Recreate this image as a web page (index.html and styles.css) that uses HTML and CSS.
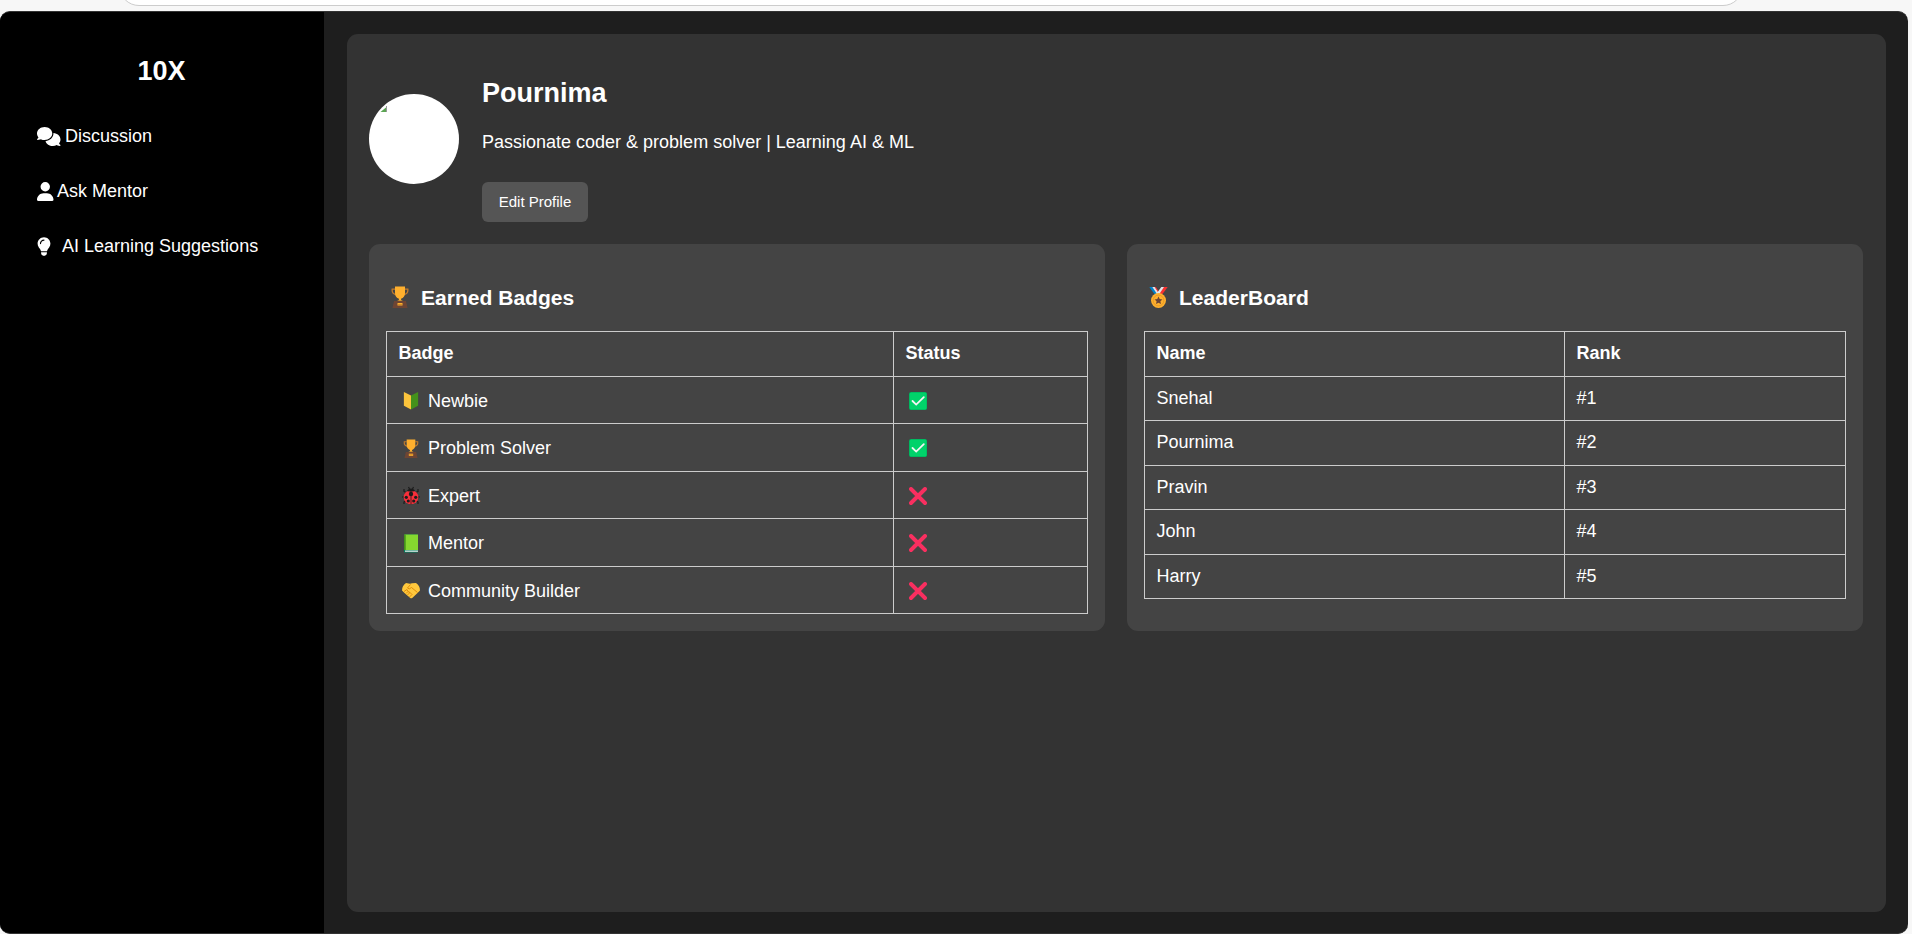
FILE: index.html
```html
<!DOCTYPE html>
<html lang="en">
<head>
<meta charset="utf-8">
<title>10X Profile</title>
<link rel="stylesheet" href="styles.css">
</head>
<body>
<svg class="defs" width="0" height="0">
  <symbol id="trophy" viewBox="0 0 18 22">
    <path d="M4 3.2H1.2C.8 6.500 2 8 5 8.500M14 3.200h2.800c.4 3.300-.8 4.800-3.800 5.300" fill="none" stroke="#c27c2c" stroke-width="1.300"/>
    <path d="M4 .5h10v6.500c0 3.300-1.800 5-3.700 5.600L10 14l2 .8H6l2-.8-.3-1.400C5.800 12 4 10.300 4 7z" fill="#ffb02e"/>
    <path d="M3 15h12l1.500 7h-15z" fill="#6d4534"/>
    <path d="M6.500 17h5v2.500h-5z" fill="#ffb02e"/><path d="M6.500 18h5v.6h-5z" fill="#b87924"/>
  </symbol>
  <symbol id="beginner" viewBox="0 0 16 20">
    <path d="M.5 1 8 4.800V19.500L.5 15.500z" fill="#fcc43c"/><path d="M15.500 1 8 4.800V19.500l7.500-4z" fill="#44911b"/>
  </symbol>
  <symbol id="ladybug" viewBox="0 0 18 18">
    <path d="M6.500.5 7.500 2.500M11.500.5 10.500 2.500M2 2.500v2.500l3 1.500M16 2.500v2.500l-3 1.500M0 10.500H4m14 0H14M2 17.500v-2l3-2m11 4v-2l-3-2" fill="none" stroke="#1c1c1c" stroke-width="1.200"/>
    <ellipse cx="9" cy="10.700" rx="7.300" ry="7" fill="#f92f3a"/>
    <path d="M5 4.500C6 1 12 1 13 4.500Q9 5.500 5 4.500z" fill="#1c1c1c"/>
    <path d="M9 4v14" stroke="#1c1c1c" stroke-width=".8"/>
    <circle cx="9" cy="7.500" r="2.200" fill="#1c1c1c"/>
    <circle cx="4.300" cy="10.800" r="1.600" fill="#1c1c1c"/><circle cx="13.700" cy="10.800" r="1.600" fill="#1c1c1c"/>
    <circle cx="6.300" cy="14.500" r="1.600" fill="#1c1c1c"/><circle cx="11.700" cy="14.500" r="1.600" fill="#1c1c1c"/>
  </symbol>
  <symbol id="book" viewBox="0 0 15 19">
    <rect x=".5" y=".5" width="14" height="18" rx="1" fill="#008463"/>
    <path d="M1.500 16.500h13v1.300h-13z" fill="#e6e6e6"/>
    <path d="M1.500.500h13V16h-14V1.500q0-1 1-1z" fill="#86d72f"/><path d="M.5 1.500q0-1 1-1H2.200V16H.5z" fill="#44911b"/>
  </symbol>
  <symbol id="handshake" viewBox="0 0 18 16">
    <path d="M4 .5 8 1.200 10 .8 14 .5q4 2.500 4 7.500l-3 3-4.500 4.300q-1.500 1-2.500 0L3 11 0 8Q0 3 4 .500z" fill="#ffc83d"/>
    <path d="m8.500 2-3 3.500q1.500 2 4-.5l6 5M2 9l3-2 1 2-2 2m2-2 2 1-2.500 2.500M8 10l2 2-2.500 2.500" fill="none" stroke="#d67d00" stroke-width=".8"/>
  </symbol>
  <symbol id="medal" viewBox="0 0 19 21">
    <path d="M.3 0h3l5 7H5.500z" fill="#0084ce"/><path d="M3.300 0h2.700l5 7H8z" fill="#e1e6eb"/><path d="M5.600 0h1.200l3.400 5-.7 1z" fill="#f8312f"/>
    <path d="M18.700 0h-4.500l-5 7h4.300z" fill="#f8312f"/><path d="M15 0h-2.700l-5 7h3z" fill="#e1e6eb"/>
    <circle cx="9.500" cy="13.500" r="7.500" fill="#ffb02e"/><circle cx="9.500" cy="13.500" r="5.400" fill="#ffb02e" stroke="#d78d20" stroke-width=".6"/>
    <path d="m9.500 9.500 1.200 2.600 2.800.3-2.100 1.900.6 2.800-2.500-1.400L7 17.100l.6-2.800-2.100-1.900 2.800-.3z" fill="#6d4534"/>
  </symbol>
  <symbol id="check" viewBox="0 0 18 18">
    <rect width="18" height="18" rx="2" fill="#00a65a"/><rect x=".6" y=".4" width="17" height="17" rx="1.500" fill="#00d26a"/>
    <path d="m3.500 9 3.700 3.600L14.800 5.200" fill="none" stroke="#f4f4f4" stroke-width="1.800" stroke-linecap="round"/>
  </symbol>
  <symbol id="cross" viewBox="0 0 18 18">
    <path d="m2 2 14 14m0-14L2 16" stroke="#f92f60" stroke-width="3.900" stroke-linecap="round"/>
  </symbol>
</svg>
<div class="chrome"><div class="address"></div></div>
<div class="app">
  <aside class="sidebar">
    <h2 class="brand">10X</h2>
    <nav class="menu">
      <a class="link"><svg class="fa chat" viewBox="0 0 640 512"><path fill="#fff" d="M208 352c114.900 0 208-78.800 208-176S322.900 0 208 0S0 78.800 0 176c0 38.600 14.700 74.300 39.600 103.400c-3.500 9.400-8.700 17.700-14.200 24.700c-4.800 6.200-9.700 11-13.300 14.300c-1.800 1.600-3.300 2.900-4.300 3.700c-.5 .4-.9 .7-1.100 .8l-.2 .2C1 327.200-1.400 334.400 .8 340.900S9.100 352 16 352c21.800 0 43.800-5.600 62.100-12.500c9.200-3.500 17.800-7.400 25.200-11.400C134.100 343.300 169.800 352 208 352zM448 176c0 112.300-99.100 196.900-216.500 207C255.800 457.400 336.400 512 432 512c38.200 0 73.900-8.700 104.700-23.900c7.500 4 16 7.900 25.200 11.400c18.300 6.900 40.300 12.500 62.100 12.500c6.900 0 13.100-4.500 15.200-11.100c2.100-6.600-.2-13.800-5.800-17.900l-.2-.2c-.2-.2-.6-.4-1.100-.8c-1-.8-2.500-2-4.300-3.700c-3.600-3.300-8.500-8.100-13.300-14.300c-5.500-7-10.700-15.400-14.200-24.700c24.900-29 39.600-64.700 39.600-103.400c0-92.800-84.900-168.900-192.600-175.500c.4 5.100 .6 10.300 .6 15.500z"/></svg><span>Discussion</span></a>
      <a class="link"><svg class="fa user" viewBox="0 0 448 512"><path fill="#fff" d="M224 256A128 128 0 1 0 224 0a128 128 0 1 0 0 256zm-45.700 48C79.800 304 0 383.800 0 482.300C0 498.700 13.300 512 29.700 512H418.300c16.400 0 29.700-13.300 29.700-29.700C448 383.800 368.200 304 269.700 304H178.300z"/></svg><span>Ask Mentor</span></a>
      <a class="link"><svg class="fa bulb" viewBox="0 0 384 512"><path fill="#fff" d="M272 384c9.600-31.900 29.500-59.100 49.200-86.200c5.200-7.100 10.400-14.200 15.400-21.400c19.800-28.500 31.400-63 31.400-100.300C368 78.800 289.200 0 192 0S16 78.800 16 176c0 37.300 11.600 71.900 31.400 100.300c5 7.200 10.200 14.300 15.400 21.400c19.800 27.100 39.700 54.400 49.200 86.200H272zM192 512c44.200 0 80-35.800 80-80V416H112v16c0 44.200 35.800 80 80 80zM112 176c0 8.800-7.200 16-16 16s-16-7.200-16-16c0-61.900 50.100-112 112-112c8.800 0 16 7.200 16 16s-7.200 16-16 16c-44.200 0-80 35.800-80 80z"/></svg><span>AI Learning Suggestions</span></a>
    </nav>
  </aside>
  <main class="main">
    <section class="panel">
      <header class="profile">
        <svg class="avatar" viewBox="0 0 90 90"><circle cx="45" cy="45" r="45" fill="#fff"/><path d="M11.500 18h6v-5z" fill="#5ba553"/><path d="M17.500 12v6" stroke="#999"/></svg>
        <div class="about">
          <h2 class="name">Pournima</h2>
          <p class="bio">Passionate coder &amp; problem solver | Learning AI &amp; ML</p>
          <button class="edit">Edit Profile</button>
        </div>
      </header>
      <div class="cards">
        <section class="card">
          <h3 class="title"><svg class="h-trophy"><use href="#trophy"/></svg><span>Earned Badges</span></h3>
          <div class="table badges">
            <div class="cell head">Badge</div><div class="cell head">Status</div>
            <div class="cell"><svg class="ico"><use href="#beginner"/></svg>Newbie</div><div class="cell"><svg class="mark"><use href="#check"/></svg></div>
            <div class="cell"><svg class="ico"><use href="#trophy"/></svg>Problem Solver</div><div class="cell"><svg class="mark"><use href="#check"/></svg></div>
            <div class="cell"><svg class="ico"><use href="#ladybug"/></svg>Expert</div><div class="cell"><svg class="mark"><use href="#cross"/></svg></div>
            <div class="cell"><svg class="ico"><use href="#book"/></svg>Mentor</div><div class="cell"><svg class="mark"><use href="#cross"/></svg></div>
            <div class="cell"><svg class="ico"><use href="#handshake"/></svg>Community Builder</div><div class="cell"><svg class="mark"><use href="#cross"/></svg></div>
          </div>
        </section>
        <section class="card">
          <h3 class="title"><svg class="h-medal"><use href="#medal"/></svg><span>LeaderBoard</span></h3>
          <div class="table ranks">
            <div class="cell head">Name</div><div class="cell head">Rank</div>
            <div class="cell">Snehal</div><div class="cell">#1</div>
            <div class="cell">Pournima</div><div class="cell">#2</div>
            <div class="cell">Pravin</div><div class="cell">#3</div>
            <div class="cell">John</div><div class="cell">#4</div>
            <div class="cell">Harry</div><div class="cell">#5</div>
          </div>
        </section>
      </div>
    </section>
  </main>
</div>
</body>
</html>
```
FILE: styles.css
```css
* { box-sizing: border-box; }
body {
  margin: 0;
  height: 934px;
  overflow: hidden;
  background: #f7f7f7;
  color: #fff;
  font: 18px/20px "Liberation Sans", Arial, sans-serif;
}
h2, h3, p { margin: 0; }
svg { display: block; flex: none; }
.defs { position: absolute; }
.chrome { height: 11px; padding: 0 169px 0 119px; overflow: hidden; display: flex; align-items: flex-end; }
.address {
  flex: 1;
  height: 40px;
  margin-bottom: 5px;
  background: #fff;
  border: 1px solid #ccc;
  border-radius: 20px;
}
.app {
  display: flex;
  width: 1908px;
  height: 923px;
  border-radius: 10px;
  overflow: hidden;
  background: #1e1e1e;
  border-top: 1px solid #333;
  border-bottom: 1px solid #333;
}
.sidebar { width: 324px; padding: 44px 23px 0 37px; background: #000; }
.brand { font-size: 27px; line-height: 30px; text-align: center; margin-right: 15px; }
.menu { display: flex; flex-direction: column; gap: 35px; margin-top: 40px; }
.link { display: flex; align-items: center; height: 20px; }
.fa { height: 19px; }
.chat { width: 23.500px; margin-right: 4.500px; }
.user { width: 16.500px; margin-right: 3.500px; }
.bulb { width: 14px; margin-right: 11px; }
.main { flex: 1; padding: 22px 22px 21px 23px; }
.panel { height: 878px; border-radius: 11px; background: #333; padding: 43px 23px 0 22px; }
.profile { display: flex; gap: 23px; padding-bottom: 22px; }
.avatar { width: 90px; height: 90px; margin-top: 17px; }
.name { font-size: 27px; line-height: 32px; }
.bio { margin-top: 23px; line-height: 20px; }
.edit {
  display: block;
  margin-top: 30px;
  width: 106px;
  height: 40px;
  border: 0;
  border-radius: 6px;
  background: #555;
  color: #fff;
  font: 15px/20px "Liberation Sans", Arial, sans-serif;
  padding: 0;
}
.cards { display: grid; grid-template-columns: 736px 736px; gap: 22px; }
.card { height: 387px; border-radius: 11px; background: #444; padding: 41px 17px 0; }
.title { display: flex; align-items: center; height: 24px; font-size: 21.06px; margin-bottom: 22px; }
.title span { padding-top: 2px; }
.h-trophy { width: 18px; height: 22px; margin: 0 12px 0 5px; }
.h-medal { width: 19px; height: 21px; margin: 0 11px 0 5px; }
.table { display: grid; border-top: 1px solid #ccc; border-left: 1px solid #ccc; }
.badges { grid-template: 45px 47px 48px 47px 48px 47px / 507px 194px; }
.ranks { grid-template: 45px 44px 45px 44px 45px 44px / 420px 281px; }
.cell {
  display: flex;
  align-items: center;
  padding: 1px 11px 0 11.500px;
  border-right: 1px solid #ccc;
  border-bottom: 1px solid #ccc;
}
.head, .ranks .cell { padding-top: 0; padding-bottom: 2px; }
.head { font-weight: bold; }
.ico { width: 18px; height: 19px; margin: 0 8px 0 3.500px; }
.mark { width: 18px; height: 18px; margin-left: 3px; }
```
